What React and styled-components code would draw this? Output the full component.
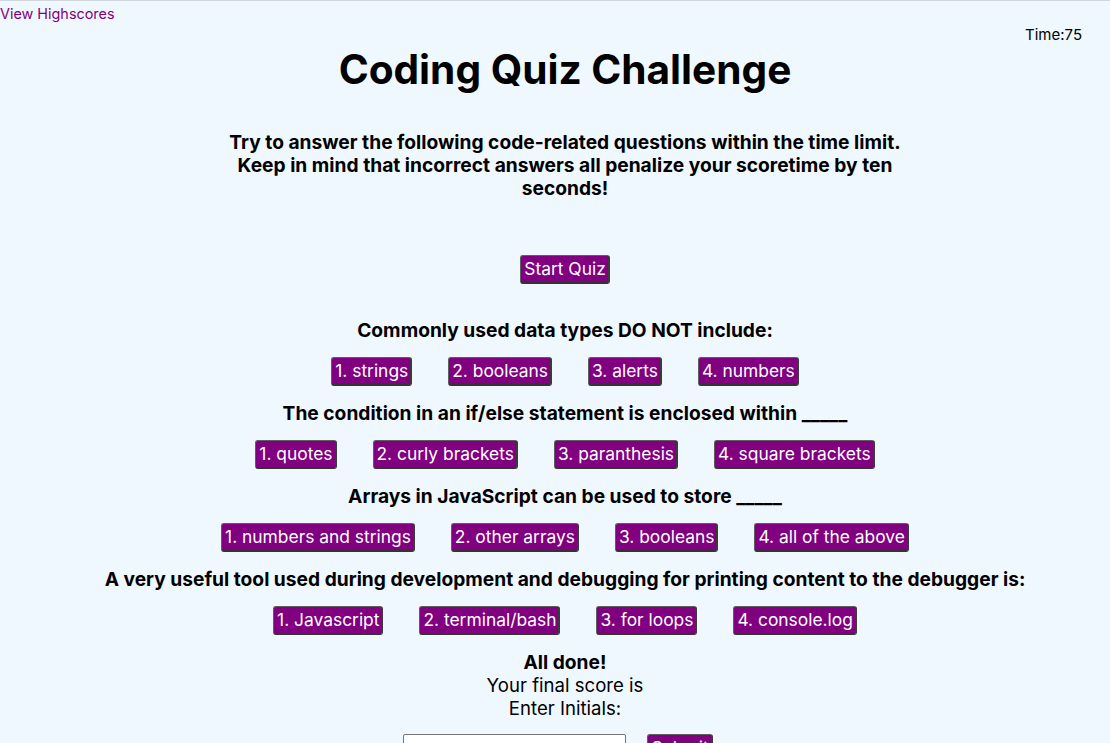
import React from "react";
import styled, { createGlobalStyle } from "styled-components";

const GlobalStyle = createGlobalStyle`
  html, body {
    margin: 0;
    padding: 0;
  }
  body {
    background: #f0f8ff;
    border-top: 1px solid #d2d6dd;
    font-family: Inter, "Noto Sans", "Liberation Sans", sans-serif;
    color: #000;
  }
`;

const Page = styled.div`
  display: flex;
  flex-direction: column;
  min-height: 742px;
`;

const Header = styled.header`
  display: flex;
  flex-direction: column;
`;

const HighscoreLink = styled.a`
  align-self: flex-start;
  font-size: 14.4px;
  line-height: 22px;
  color: #800080;
  text-decoration: none;
  margin-top: 2px;
`;

const Timer = styled.div`
  align-self: flex-end;
  font-size: 15px;
  line-height: 20px;
  margin-right: 28px;
`;

const Main = styled.main`
  display: flex;
  flex-direction: column;
  align-items: center;
  padding-left: 20px;
`;

const Title = styled.h1`
  margin: 1px 0 0;
  font-size: 40.6px;
  line-height: 48px;
  font-weight: 700;
`;

const Intro = styled.p`
  margin: 37px 0 0;
  max-width: 690px;
  text-align: center;
  font-size: 19.2px;
  line-height: 23px;
  font-weight: 700;
`;

const Button = styled.button`
  font-family: Inter, "Noto Sans", "Liberation Sans", sans-serif;
  font-size: 17.4px;
  line-height: 22px;
  color: #fff;
  background: #800080;
  border: 1px solid #5e5e5e;
  border-bottom: 2px solid #333;
  border-right: 2px solid #3a3a3a;
  border-radius: 3px;
  padding: 2px 2px 2px 3px;
  cursor: pointer;
  white-space: nowrap;
`;

const StartButton = styled(Button)`
  margin-top: 55px;
`;

const Question = styled.section`
  display: flex;
  flex-direction: column;
  align-items: center;
  margin-top: ${(p) => (p.$first ? "35px" : "16px")};
`;

const QuestionText = styled.h3`
  margin: 0;
  font-size: 19.2px;
  line-height: 23px;
  font-weight: 700;
`;

const Answers = styled.div`
  display: flex;
  gap: 36px;
  margin-top: 15px;
`;

const Done = styled.section`
  display: flex;
  flex-direction: column;
  align-items: center;
  margin-top: 16px;
  font-size: 18.6px;
  line-height: 23px;
`;

const DoneTitle = styled.h3`
  margin: 0;
  font-size: 19.2px;
  line-height: 23px;
  font-weight: 700;
`;

const Line = styled.div``;

const Form = styled.form`
  display: flex;
  align-items: flex-start;
  gap: 21px;
  margin-top: 14px;
  padding-right: 14px;
`;

const Input = styled.input`
  width: 223px;
  height: 28px;
  box-sizing: border-box;
  border: 1px solid #767676;
  border-radius: 2px;
  background: #fff;
`;

const questions = [
  {
    q: "Commonly used data types DO NOT include:",
    a: ["1. strings", "2. booleans", "3. alerts", "4. numbers"],
  },
  {
    q: "The condition in an if/else statement is enclosed within _____",
    a: ["1. quotes", "2. curly brackets", "3. paranthesis", "4. square brackets"],
  },
  {
    q: "Arrays in JavaScript can be used to store _____",
    a: ["1. numbers and strings", "2. other arrays", "3. booleans", "4. all of the above"],
  },
  {
    q: "A very useful tool used during development and debugging for printing content to the debugger is:",
    a: ["1. Javascript", "2. terminal/bash", "3. for loops", "4. console.log"],
  },
];

export default function App() {
  return (
    <>
      <GlobalStyle />
      <Page>
        <Header>
          <HighscoreLink href="#">View Highscores</HighscoreLink>
          <Timer>Time:75</Timer>
        </Header>
        <Main>
          <Title>Coding Quiz Challenge</Title>
          <Intro>
            Try to answer the following code-related questions within the time limit.
            Keep in mind that incorrect answers all penalize your scoretime by ten seconds!
          </Intro>
          <StartButton type="button">Start Quiz</StartButton>
          {questions.map((item, i) => (
            <Question key={i} $first={i === 0}>
              <QuestionText>{item.q}</QuestionText>
              <Answers>
                {item.a.map((ans) => (
                  <Button type="button" key={ans}>
                    {ans}
                  </Button>
                ))}
              </Answers>
            </Question>
          ))}
          <Done>
            <DoneTitle>All done!</DoneTitle>
            <Line>Your final score is</Line>
            <Line>Enter Initials:</Line>
            <Form onSubmit={(e) => e.preventDefault()}>
              <Input type="text" />
              <Button type="submit">Submit</Button>
            </Form>
          </Done>
        </Main>
      </Page>
    </>
  );
}
